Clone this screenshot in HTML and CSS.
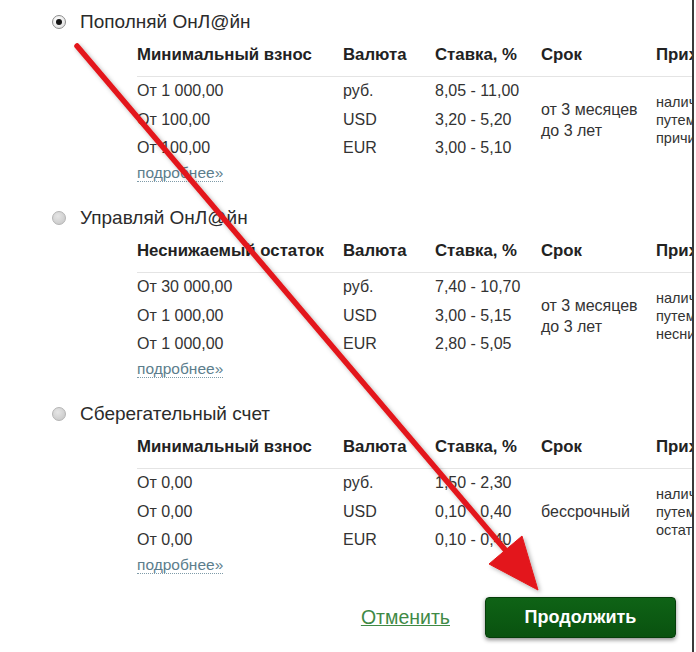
FILE: index.html
```html
<!DOCTYPE html>
<html lang="ru">
<head>
<meta charset="utf-8">
<title>Вклады</title>
<link rel="stylesheet" href="styles.css">
</head>
<body>
<div class="page">
  <section class="deposit">
    <div class="option"><span class="radio checked"></span><span class="title">Пополняй ОнЛ@йн</span></div>
    <div class="grid">
      <div class="th">Минимальный взнос</div><div class="th">Валюта</div><div class="th">Ставка, %</div><div class="th">Срок</div><div class="th">Приходные операции</div>
      <div class="td">От 1 000,00</div><div class="td">руб.</div><div class="td">8,05 - 11,00</div>
      <div class="term">от 3 месяцев<br>до 3 лет</div>
      <div class="ops">наличными,<br>путем перевода,<br>причислением %</div>
      <div class="td">От 100,00</div><div class="td">USD</div><div class="td">3,20 - 5,20</div>
      <div class="td">От 100,00</div><div class="td">EUR</div><div class="td">3,00 - 5,10</div>
    </div>
    <a class="more" href="#">подробнее»</a>
  </section>

  <section class="deposit">
    <div class="option"><span class="radio"></span><span class="title">Управляй ОнЛ@йн</span></div>
    <div class="grid">
      <div class="th">Неснижаемый остаток</div><div class="th">Валюта</div><div class="th">Ставка, %</div><div class="th">Срок</div><div class="th">Приходные операции</div>
      <div class="td">От 30 000,00</div><div class="td">руб.</div><div class="td">7,40 - 10,70</div>
      <div class="term">от 3 месяцев<br>до 3 лет</div>
      <div class="ops">наличными,<br>путем перевода,<br>неснижаемый остаток</div>
      <div class="td">От 1 000,00</div><div class="td">USD</div><div class="td">3,00 - 5,15</div>
      <div class="td">От 1 000,00</div><div class="td">EUR</div><div class="td">2,80 - 5,05</div>
    </div>
    <a class="more" href="#">подробнее»</a>
  </section>

  <section class="deposit">
    <div class="option"><span class="radio"></span><span class="title">Сберегательный счет</span></div>
    <div class="grid">
      <div class="th">Минимальный взнос</div><div class="th">Валюта</div><div class="th">Ставка, %</div><div class="th">Срок</div><div class="th">Приходные операции</div>
      <div class="td">От 0,00</div><div class="td">руб.</div><div class="td">1,50 - 2,30</div>
      <div class="term">бессрочный</div>
      <div class="ops">наличными,<br>путем перевода,<br>остатком</div>
      <div class="td">От 0,00</div><div class="td">USD</div><div class="td">0,10 - 0,40</div>
      <div class="td">От 0,00</div><div class="td">EUR</div><div class="td">0,10 - 0,40</div>
    </div>
    <a class="more" href="#">подробнее»</a>
  </section>

  <div class="actions">
    <a class="cancel" href="#">Отменить</a>
    <button class="continue" type="button">Продолжить</button>
  </div>

  <svg class="arrow" width="692" height="652" viewBox="0 0 692 652" aria-hidden="true">
    <defs>
      <filter id="sh" x="-10%" y="-10%" width="120%" height="120%">
        <feDropShadow dx="2" dy="2" stdDeviation="2" flood-color="#000" flood-opacity="0.3"/>
      </filter>
    </defs>
    <g filter="url(#sh)" fill="#e3191b" stroke="#e3191b">
      <line x1="77" y1="46" x2="507" y2="552" stroke-width="5.5" stroke-linecap="round"/>
      <polygon points="538,590 522,536 489,564" stroke-width="1" stroke-linejoin="round"/>
    </g>
  </svg>
</div>
</body>
</html>
```

FILE: styles.css
```css
html, body {
  margin: 0;
  padding: 0;
  background: #fff;
}

body {
  font-family: "Liberation Sans", Arial, sans-serif;
  color: #333;
}

.page {
  position: relative;
  width: 694px;
  height: 652px;
  box-sizing: border-box;
  border-right: 2px solid #3a3a3a;
  padding-top: 10px;
  padding-left: 52px;
  overflow: hidden;
}

.deposit {
  margin-bottom: 24px;
}

.option {
  display: flex;
  align-items: center;
  gap: 14px;
  height: 24px;
}

.title {
  font-size: 19px;
  line-height: 24px;
  color: #2b2b2b;
}

.radio {
  width: 14px;
  height: 14px;
  box-sizing: border-box;
  border-radius: 50%;
  border: 1px solid #b4b4b4;
  background: radial-gradient(circle at 40% 35%, #e6e6e6, #c4c4c4);
  display: flex;
  align-items: center;
  justify-content: center;
  flex: none;
}

.radio.checked {
  border-color: #8c8c8c;
  background: radial-gradient(circle at 40% 35%, #ffffff, #dcdcdc);
}

.radio.checked::after {
  content: "";
  width: 6px;
  height: 6px;
  border-radius: 50%;
  background: #151515;
}

.grid {
  margin-top: 11px;
  margin-left: 85px;
  display: grid;
  grid-template-columns: 206px 92px 106px 115px 220px;
  grid-template-rows: auto 28.5px 28.5px 28.5px;
  width: 739px;
}

.th {
  font-weight: bold;
  font-size: 16.8px;
  line-height: 20px;
  color: #222;
  padding-bottom: 11px;
  border-bottom: 1px solid #e4e4e4;
  white-space: nowrap;
}

.td {
  font-size: 16px;
  line-height: 28.5px;
  white-space: nowrap;
}

.term {
  grid-column: 4;
  grid-row: 2 / span 3;
  align-self: center;
  font-size: 16px;
  line-height: 21px;
  white-space: nowrap;
}

.ops {
  grid-column: 5;
  grid-row: 2 / span 3;
  align-self: center;
  font-size: 14.5px;
  line-height: 18px;
  white-space: nowrap;
}

.more {
  display: inline-block;
  margin-top: 1.5px;
  margin-left: 85px;
  font-size: 15.5px;
  line-height: 17px;
  color: #5c7d8c;
  text-decoration: none;
  border-bottom: 1px dotted #7f9ba8;
}

.actions {
  display: flex;
  justify-content: flex-end;
  align-items: center;
  gap: 35px;
  padding-right: 16px;
  margin-top: -1px;
}

.cancel {
  font-size: 19.5px;
  color: #3f8a46;
  text-decoration: underline;
}

.continue {
  width: 191px;
  height: 41px;
  border: 1px solid #053d0a;
  border-radius: 4px;
  background: linear-gradient(#0f6316, #09520f);
  color: #fff;
  font-family: "Liberation Sans", Arial, sans-serif;
  font-weight: bold;
  font-size: 18px;
  box-shadow: 0 2px 4px rgba(0, 0, 0, 0.45);
  cursor: pointer;
}

.arrow {
  position: absolute;
  left: 0;
  top: 0;
  pointer-events: none;
}
```
